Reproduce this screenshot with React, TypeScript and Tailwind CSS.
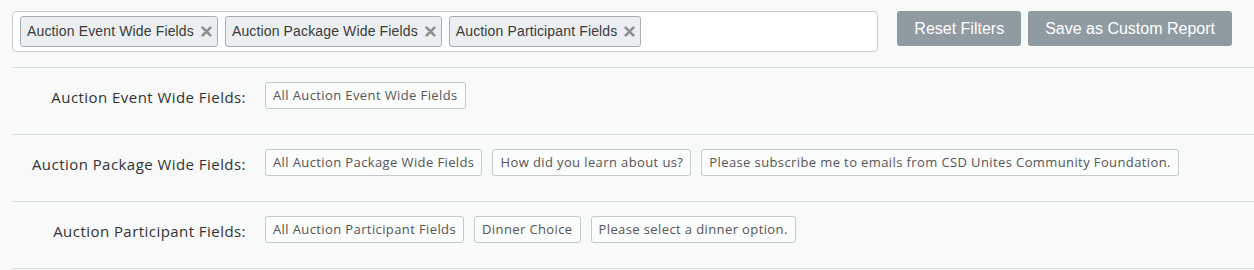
import React from 'react';

const selected = ['Auction Event Wide Fields', 'Auction Package Wide Fields', 'Auction Participant Fields'];

const groups = [
  { label: 'Auction Event Wide Fields:', chips: ['All Auction Event Wide Fields'] },
  {
    label: 'Auction Package Wide Fields:',
    chips: ['All Auction Package Wide Fields', 'How did you learn about us?', 'Please subscribe me to emails from CSD Unites Community Foundation.'],
  },
  { label: 'Auction Participant Fields:', chips: ['All Auction Participant Fields', 'Dinner Choice', 'Please select a dinner option.'] },
];

const XIcon = () => (
  <svg width="11" height="11" viewBox="0 0 10 10" className="ml-[7px] shrink-0">
    <path d="M1.5 1.5 L8.5 8.5 M8.5 1.5 L1.5 8.5" stroke="#8a8f93" strokeWidth="2.4" strokeLinecap="round" />
  </svg>
);

export default function App() {
  return (
    <div
      className="w-[1254px] h-[270px] bg-[#f8f9f9] pl-[12px] text-[#333]"
      style={{ fontFamily: '"Liberation Sans", Arial, sans-serif' }}
    >
      {/* filter bar */}
      <div className="flex items-start pt-[11px] pr-[22px] pb-[15px] border-b border-[#dcdfe1]">
        <div className="flex-1 h-[41px] bg-white border border-[#c7cbce] rounded-[4px] flex items-center gap-[7px] pl-[7px]">
          {selected.map((s) => (
            <div
              key={s}
              className="h-[31px] flex items-center pl-[6px] pr-[5px] bg-[#eceff1] border border-[#a9aeb2] rounded-[3px] text-[14px] tracking-[0.01em] text-[#3a3a3a]"
            >
              {s}
              <XIcon />
            </div>
          ))}
        </div>
        <div className="flex gap-[7px] ml-[19px]">
          <button className="h-[35px] px-[17px] bg-[#8f9aa1] text-white text-[16px] rounded-[3px]">Reset Filters</button>
          <button className="h-[35px] px-[17px] bg-[#8f9aa1] text-white text-[16px] rounded-[3px]">Save as Custom Report</button>
        </div>
      </div>

      {groups.map((g) => (
        <div
          key={g.label}
          className="h-[67px] flex items-start pt-[14px] border-b border-[#dcdfe1]"
          style={{ fontFamily: '"Open Sans", sans-serif' }}
        >
          <div className="w-[234px] text-right text-[15px] leading-[20px] tracking-[0.03em] text-[#333] mt-[5px]">{g.label}</div>
          <div className="flex gap-[10px] ml-[19px]">
            {g.chips.map((c) => (
              <div
                key={c}
                className="h-[27px] flex items-center px-[7px] border border-[#c5c9cc] rounded-[3px] bg-[#fbfcfc] text-[13px] tracking-[0.03em] text-[#555]"
              >
                {c}
              </div>
            ))}
          </div>
        </div>
      ))}
    </div>
  );
}
